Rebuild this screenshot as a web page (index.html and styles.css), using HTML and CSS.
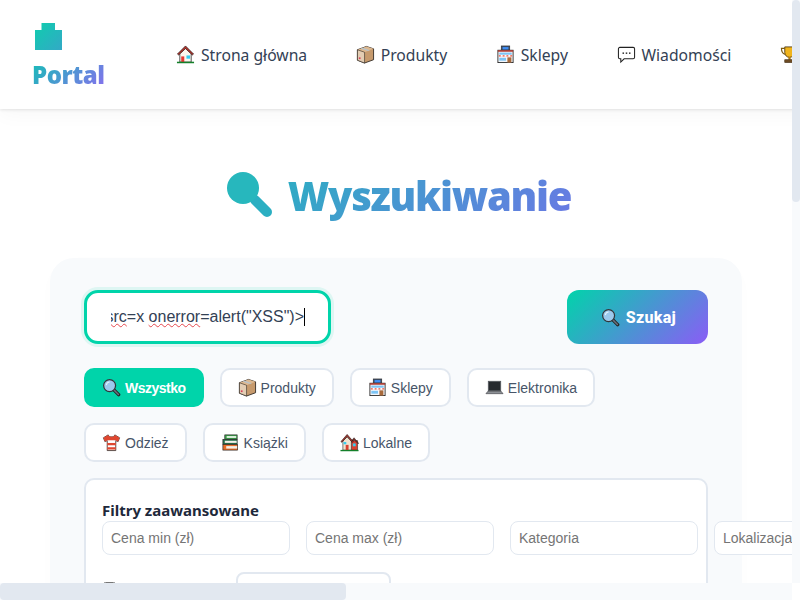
FILE: index.html
```html
<!DOCTYPE html>
<html lang="pl">
<head>
    <meta charset="UTF-8">
    <meta name="viewport" content="width=device-width, initial-scale=1.0">
    <title>Wyszukiwanie - Portal</title>
    <link rel="stylesheet" href="styles.css">
</head>
<body>
    <!-- Icon sprite -->
    <svg class="sprite" xmlns="http://www.w3.org/2000/svg">
        <symbol id="i-home" viewBox="0 0 20 20">
            <path d="M4 9v9h12V9L10 3z" fill="#fdf6ee" stroke="#222" stroke-width=".8"/>
            <path d="M10 1 1.5 9.5l1.3 1L10 3.8l7.2 6.7 1.3-1z" fill="#b5342c" stroke="#201010" stroke-width=".7"/>
            <rect x="5.5" y="12" width="3.2" height="6" fill="#e53935"/>
            <rect x="11" y="11" width="3.8" height="3.4" fill="#35cdf0"/>
            <rect x="1" y="17.6" width="18" height="1.6" fill="#14802a"/>
        </symbol>
        <symbol id="i-box" viewBox="0 0 20 20">
            <path d="M1.5 5 11 1.5 18.5 4v11.5L9 19l-7.5-3z" fill="#c69a6d" stroke="#2b2520" stroke-width=".9"/>
            <path d="M1.5 5 9 7.6 18.5 4 11 1.5z" fill="#dcb890"/>
            <path d="M1.5 5 9 7.6V19l-7.5-3z" fill="#e3cdb3" stroke="#2b2520" stroke-width=".6"/>
            <path d="M5 3.6 12.6 6.2l2-.8L7.2 2.8z" fill="#b9c3c9"/>
            <rect x="3" y="13" width="1.8" height="1.8" fill="#d9405a"/>
        </symbol>
        <symbol id="i-shop" viewBox="0 0 20 20">
            <rect x="5.5" y="1" width="9" height="5" fill="#41526e" stroke="#222" stroke-width=".6"/>
            <rect x="7" y="2.2" width="6" height="2.6" fill="#3f8ef5"/>
            <rect x="2" y="5.5" width="16" height="13" fill="#f4f6fa" stroke="#222" stroke-width=".9"/>
            <rect x="2" y="5.5" width="16" height="1.6" fill="#b3392f"/>
            <rect x="3.5" y="8" width="13" height="2.2" fill="#7cc4f5"/>
            <path d="M3 10.5h14v1.8H3z" fill="#ef7b6c"/>
            <path d="M5 10.5h2v1.8H5zM9 10.5h2v1.8H9zM13 10.5h2v1.8h-2z" fill="#fff"/>
            <rect x="3.5" y="13.5" width="7" height="3" fill="#7cc4f5"/>
            <rect x="12" y="13" width="4.2" height="5.5" fill="#a86a3c"/>
        </symbol>
        <symbol id="i-chat" viewBox="0 0 20 20">
            <path d="M3 2.500h14A1.500 1.500 0 0 1 18.500 4v9a1.500 1.500 0 0 1-1.500 1.500H7.500L4 18v-3.500H3A1.500 1.500 0 0 1 1.500 13V4A1.500 1.500 0 0 1 3 2.500z" fill="#fff" stroke="#222" stroke-width="1.100"/>
            <rect x="5.800" y="7.800" width="1.600" height="1.600" fill="#333"/>
            <rect x="9.200" y="7.800" width="1.600" height="1.600" fill="#333"/>
            <rect x="12.600" y="7.800" width="1.600" height="1.600" fill="#333"/>
        </symbol>
        <symbol id="i-trophy" viewBox="0 0 20 20">
            <path d="M5 2h10v6a5 5 0 0 1-10 0z" fill="#f0b41c" stroke="#4a3510" stroke-width=".9"/>
            <path d="M5 3.500H1.500c0 4 1.500 6 4.500 6.500M15 3.500h3.500c0 4-1.500 6-4.500 6.500" fill="none" stroke="#7a5a10" stroke-width="1.200"/>
            <rect x="8.800" y="12.500" width="2.400" height="3" fill="#b17d12"/>
            <rect x="5" y="15.500" width="10" height="3" fill="#6d4a22" stroke="#3a2810" stroke-width=".6"/>
        </symbol>
        <symbol id="i-search" viewBox="0 0 20 20">
            <path d="M12 12 17.500 17.500" stroke="#222" stroke-width="3.600" stroke-linecap="round"/>
            <path d="M12.500 12.500 17.300 17.300" stroke="#6b7280" stroke-width="1.500" stroke-linecap="round"/>
            <circle cx="8" cy="8" r="6.300" fill="#9cc9ec" stroke="#33363a" stroke-width="1.300"/>
            <path d="M4.500 7.500A3.800 3.800 0 0 1 8 4.200" fill="none" stroke="#e3f2fd" stroke-width="1.200"/>
        </symbol>
        <symbol id="i-laptop" viewBox="0 0 20 20">
            <rect x="3.500" y="3.500" width="13" height="10" fill="#262a2e" stroke="#55595e" stroke-width=".9"/>
            <path d="M3 14h14l2 2.500H1z" fill="#8d9196" stroke="#33363a" stroke-width=".6"/>
        </symbol>
        <symbol id="i-shirt" viewBox="0 0 20 20">
            <path d="M6.500 2 1.500 5l1.500 4 2.500-1V18.500h9V8l2.500 1 1.500-4-5-3c-.5 1.500-1.700 2-3.500 2s-3-.5-3.500-2z" fill="#fff" stroke="#2b1510" stroke-width=".8"/>
            <path d="M6.500 2 1.500 5l1.500 4 2.500-1V7.500h9V8l2.500 1 1.500-4-5-3c-.5 1.500-1.700 2-3.500 2s-3-.5-3.500-2z" fill="#e0462f"/>
            <rect x="5.500" y="10.500" width="9" height="2.400" fill="#e0462f"/>
            <rect x="5.500" y="15" width="9" height="2.400" fill="#e0462f"/>
        </symbol>
        <symbol id="i-books" viewBox="0 0 20 20">
            <rect x="4" y="2" width="13" height="4.500" fill="#3fa34d" stroke="#222" stroke-width=".7"/>
            <rect x="6" y="3.200" width="10" height="2" fill="#dff3e0"/>
            <rect x="2" y="6.800" width="15" height="5" fill="#26734d" stroke="#222" stroke-width=".7"/>
            <rect x="4" y="8.200" width="12.500" height="2.200" fill="#f3f1ea"/>
            <rect x="2" y="12.200" width="15.500" height="5.800" fill="#e8702a" stroke="#222" stroke-width=".7"/>
            <rect x="5.500" y="13.800" width="11.500" height="2.600" fill="#f3f1ea"/>
        </symbol>
        <symbol id="i-houses" viewBox="0 0 20 20">
            <path d="M11 8v10h7.500V8z" fill="#d9402f" stroke="#222" stroke-width=".6"/>
            <path d="M14.800 5 9.500 11h1.500l3.800-4 3.800 4h1.100z" fill="#7b2a22" stroke="#222" stroke-width=".5"/>
            <path d="M3 8.500V18h9V8.500L7.500 4z" fill="#f0e2cf" stroke="#222" stroke-width=".6"/>
            <path d="M7.500 1.500 1 9l1 .8 5.500-6 5.500 6 1-.8z" fill="#a8342a" stroke="#201010" stroke-width=".6"/>
            <rect x="6" y="12.500" width="3" height="5.500" fill="#d9402f"/>
            <rect x="3.800" y="9.500" width="2.800" height="2.400" fill="#35cdf0"/>
            <rect x="13.500" y="11" width="3" height="3" fill="#35cdf0"/>
            <rect x=".5" y="17.800" width="19" height="1.400" fill="#14802a"/>
        </symbol>
    </svg>

    <header class="site-header">
        <a class="logo" href="#">
            <svg class="logo-icon" viewBox="0 0 27 27" aria-hidden="true">
                <defs>
                    <linearGradient id="logo-fill" x1="0" y1="0" x2="1" y2="1">
                        <stop offset="0" stop-color="#0fcdae"/>
                        <stop offset="1" stop-color="#33a9c6"/>
                    </linearGradient>
                </defs>
                <path d="M6.500 0h13.500v7h7v20H0V7h6.500z" fill="url(#logo-fill)"/>
            </svg>
            <span class="logo-text">Portal</span>
        </a>
        <nav class="main-nav">
            <a href="#"><svg class="icon"><use href="#i-home"/></svg>Strona główna</a>
            <a href="#"><svg class="icon"><use href="#i-box"/></svg>Produkty</a>
            <a href="#"><svg class="icon"><use href="#i-shop"/></svg>Sklepy</a>
            <a href="#"><svg class="icon"><use href="#i-chat"/></svg>Wiadomości</a>
            <a href="#"><svg class="icon"><use href="#i-trophy"/></svg>Ranking</a>
        </nav>
    </header>

    <main class="search-page">
        <h1 class="page-title">
            <svg class="title-icon" viewBox="0 0 46 46" aria-hidden="true">
                <path d="M29 29 41 41" stroke="#2bafc2" stroke-width="10" stroke-linecap="round"/>
                <circle cx="17" cy="17" r="16" fill="#27b7bd"/>
            </svg>
            Wyszukiwanie
        </h1>

        <section class="search-card">
            <div class="search-row">
                <div class="search-input"><div class="search-clip"><span>&lt;img <u>src</u>=x <u>onerror</u>=alert("XSS")&gt;</span><i class="caret"></i></div></div>
                <button class="search-btn"><svg class="icon"><use href="#i-search"/></svg>Szukaj</button>
            </div>

            <div class="tabs">
                <button class="tab active"><svg class="icon"><use href="#i-search"/></svg>Wszystko</button>
                <button class="tab"><svg class="icon"><use href="#i-box"/></svg>Produkty</button>
                <button class="tab"><svg class="icon"><use href="#i-shop"/></svg>Sklepy</button>
                <button class="tab"><svg class="icon"><use href="#i-laptop"/></svg>Elektronika</button>
                <button class="tab"><svg class="icon"><use href="#i-shirt"/></svg>Odzież</button>
                <button class="tab"><svg class="icon"><use href="#i-books"/></svg>Książki</button>
                <button class="tab"><svg class="icon"><use href="#i-houses"/></svg>Lokalne</button>
            </div>

            <div class="filters">
                <h4>Filtry zaawansowane</h4>
                <div class="filter-row">
                    <input type="text" placeholder="Cena min (zł)">
                    <input type="text" placeholder="Cena max (zł)">
                    <input type="text" placeholder="Kategoria">
                    <input type="text" placeholder="Lokalizacja">
                </div>
                <div class="filter-row second">
                    <label class="check"><input type="checkbox"> Tylko dostępne</label>
                    <select><option>Sortuj według</option></select>
                </div>
            </div>
        </section>
    </main>

    <!-- Page scrollbars -->
    <div class="scrollbar vertical"><span class="thumb"></span></div>
    <div class="scrollbar horizontal"><span class="thumb"></span></div>
    <div class="scroll-corner"></div>
</body>
</html>
```

FILE: styles.css
```css
* {
    box-sizing: border-box;
}

html,
body {
    height: 600px;
    overflow: hidden;
}

body {
    margin: 0;
    font-family: "Noto Sans", sans-serif;
    background: #fff;
    color: #1e293b;
}

.sprite {
    display: none;
}

.icon {
    flex: none;
    width: 19px;
    height: 19px;
}

/* Header */
.site-header {
    display: flex;
    align-items: center;
    gap: 72px;
    width: 1813px;
    height: 109px;
    padding: 0 33px;
    background: #fff;
    box-shadow: 0 1px 3px rgba(0, 0, 0, 0.1), 0 4px 20px rgba(0, 0, 0, 0.04);
}

.logo {
    display: flex;
    flex-direction: column;
    align-items: flex-start;
    gap: 7px;
    padding-top: 7px;
    text-decoration: none;
}
.logo-icon {
    width: 27px;
    height: 27px;
    margin-left: 2px;
}
.logo-text {
    margin-left: -1px;
    font-size: 24px;
    font-weight: 900;
    line-height: 36px;
    letter-spacing: -0.5px;
    background: linear-gradient(135deg, #12c0b5, #8b6cf0);
    -webkit-background-clip: text;
    background-clip: text;
    color: transparent;
}

.main-nav {
    display: flex;
    gap: 49px;
}
.main-nav a {
    display: inline-flex;
    align-items: center;
    gap: 5.5px;
    color: #334155;
    text-decoration: none;
    font-size: 15.7px;
    font-weight: 450;
    white-space: nowrap;
}

/* Search */
.search-page {
    width: 792px;
    padding: 48px 50px;
}

.page-title {
    display: flex;
    align-items: center;
    justify-content: center;
    gap: 16px;
    margin: 0 0 24px;
    padding-left: 5px;
    font-size: 40px;
    font-weight: 900;
    line-height: 77px;
    letter-spacing: -1.3px;
    background: linear-gradient(135deg, #00d4aa, #8b5cf6);
    -webkit-background-clip: text;
    background-clip: text;
    color: transparent;
}
.title-icon {
    width: 46px;
    height: 46px;
    margin-bottom: 4px;
}

.search-card {
    padding: 32px 34px;
    background: #f8fafc;
    border-radius: 24px;
    box-shadow: 0 4px 24px rgba(0, 0, 0, 0.01);
}

.search-row {
    display: flex;
    justify-content: space-between;
    margin-bottom: 24px;
}

.search-input {
    width: 247px;
    height: 54px;
    padding: 0 23px 0 24px;
    background: #fff;
    border: 3px solid #00d4aa;
    border-radius: 14px;
    box-shadow: 0 0 0 3px rgba(0, 212, 170, 0.1);
    font-family: "Liberation Sans", sans-serif;
    font-size: 16px;
    color: #334155;
    white-space: nowrap;
}
.search-clip {
    display: flex;
    justify-content: flex-end;
    align-items: center;
    height: 100%;
    overflow: hidden;
}
.search-clip span {
    flex: none;
}
.search-clip u {
    text-decoration: underline wavy #e5484d 1px;
}
.caret {
    flex: none;
    width: 1px;
    height: 18px;
    background: #000;
}

.search-btn {
    display: inline-flex;
    align-items: center;
    justify-content: center;
    gap: 6px;
    width: 141px;
    height: 54px;
    padding: 0 0 0 2px;
    border: 0;
    border-radius: 12px;
    background: linear-gradient(135deg, #00d4aa, #8b5cf6);
    color: #fff;
    font-family: Roboto, sans-serif;
    font-size: 16px;
    font-weight: 800;
    letter-spacing: 0.3px;
}

.tabs {
    display: flex;
    flex-wrap: wrap;
    gap: 16px;
    margin-bottom: 16px;
}
.tab {
    display: inline-flex;
    align-items: center;
    gap: 4px;
    height: 39px;
    padding: 0 16px;
    background: #fff;
    border: 2px solid #e2e8f0;
    border-radius: 10px;
    color: #475569;
    font-family: "Liberation Sans", sans-serif;
    font-size: 14px;
}
.tab.active {
    background: #00d4aa;
    border-color: #00d4aa;
    color: #fff;
    font-weight: 700;
    letter-spacing: -0.5px;
}

.filters {
    padding: 16px;
    background: #fff;
    border: 2px solid #e2e8f0;
    border-radius: 10px;
}
.filters h4 {
    margin: 4px 0 0;
    font-size: 15px;
    font-weight: 700;
    line-height: 21px;
}

.filter-row {
    display: flex;
    gap: 16px;
}
.filter-row.second {
    align-items: flex-start;
    gap: 32px;
    margin-top: 17px;
}
.filter-row input[type="text"],
.filter-row select {
    flex: none;
    width: 188px;
    height: 34px;
    padding: 0 8px;
    background: #fff;
    border: 1px solid #e2e8f0;
    border-radius: 8px;
    font-family: "Liberation Sans", sans-serif;
    font-size: 14px;
}
.filter-row select {
    width: 155px;
    height: 46px;
    border-width: 2px;
}
.check {
    display: flex;
    gap: 4px;
    width: 102px;
    margin-top: 10px;
    font-size: 14px;
    line-height: 30px;
    white-space: nowrap;
}
.check input {
    align-self: flex-start;
    margin: 0 0 0 1px;
}

/* Scrollbars sit over the page */
.scrollbar {
    position: fixed;
    background: #f8fafc;
}
.scrollbar.vertical {
    top: 0;
    right: 0;
    width: 8px;
    height: 583px;
}
.scrollbar.horizontal {
    left: 0;
    bottom: 0;
    width: 792px;
    height: 17px;
}
.thumb {
    display: block;
    background: #e2e8f0;
    border-radius: 4px;
}
.vertical .thumb {
    height: 202px;
}
.horizontal .thumb {
    width: 346px;
    height: 17px;
}
.scroll-corner {
    position: fixed;
    right: 0;
    bottom: 0;
    width: 8px;
    height: 17px;
    background: #fff;
}
```
